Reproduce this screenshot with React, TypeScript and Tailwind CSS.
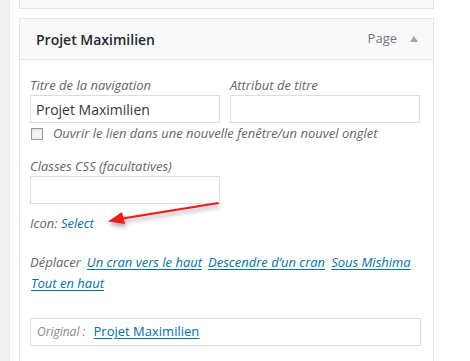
const links = ["Un cran vers le haut", "Descendre d’un cran", "Sous Mishima", "Tout en haut"];

const App = () => {
  return (
    <div className="relative w-[470px] h-[361px] overflow-hidden bg-white flex font-['Open_Sans',sans-serif] text-[13px] text-[#444]">
      <div className="w-[10px] shrink-0 bg-[#f1f1f1] border-r border-[#e8e8e8]"></div>
      <div className="pl-[9px] w-[424px] shrink-0 flex flex-col">
        <div className="h-[9px] border-x border-b border-[#e5e5e5] bg-[#f9f9f9]"></div>
        <div className="mt-[9px] flex-1 border border-[#e5e5e5] border-b-0 bg-white">
          <div className="h-[41px] pl-[16px] pr-[15px] bg-[#f9f9f9] border-b border-[#e5e5e5] flex items-center justify-between">
            <div className="text-[14px] font-semibold text-[#23282d]">Projet Maximilien</div>
            <div className="flex items-center gap-[13px]">
              <span className="text-[13px] text-[#72777c]">Page</span>
              <span className="w-0 h-0 border-x-[4px] border-x-transparent border-b-[6px] border-b-[#a0a5aa]"></span>
            </div>
          </div>
          <div className="pt-[15px] pl-[10px] pr-[12px]">
            <div className="grid grid-cols-[190px_190px] gap-x-[10px]">
              <div>
                <div className="italic text-[#666] leading-[20px]">Titre de la navigation</div>
                <div className="h-[28px] border border-[#ddd] px-[5px] flex items-center text-[14px] text-[#32373c]">Projet Maximilien</div>
              </div>
              <div>
                <div className="italic text-[#666] leading-[20px]">Attribut de titre</div>
                <div className="h-[28px] border border-[#ddd]"></div>
              </div>
            </div>
            <div className="h-[21px] flex items-center gap-[10px] pl-[1px]">
              <span className="w-[12px] h-[12px] border border-[#999] bg-[#f3f3f3] shadow-[inset_0_1px_2px_rgba(0,0,0,0.1)]"></span>
              <span className="italic text-[#666]">Ouvrir le lien dans une nouvelle fenêtre/un nouvel onglet</span>
            </div>
            <div className="mt-[12px] italic text-[#666] leading-[20px]">Classes CSS (facultatives)</div>
            <div className="w-[190px] h-[28px] border border-[#ddd]"></div>
            <div className="mt-[9px] leading-[20px] italic text-[#666]">
              Icon: <span className="text-[#0073aa]">Select</span>
            </div>
            <div className="mt-[19px] leading-[21px] italic text-[#666] flex flex-wrap gap-x-[5px]">
              <span>Déplacer</span>
              {links.map((l) => (
                <a key={l} className="text-[#0073aa] underline underline-offset-[2px] pl-[1px]">
                  {l}
                </a>
              ))}
            </div>
            <div className="mt-[24px] h-[28px] border border-[#ddd] px-[6px] flex items-center gap-[8px]">
              <span className="italic text-[12px] text-[#888]">Original :</span>
              <a className="text-[#0073aa] underline underline-offset-[2px]">Projet Maximilien</a>
            </div>
          </div>
        </div>
      </div>
      <svg className="absolute left-[100px] top-[196px]" width="130" height="40" viewBox="0 0 130 40">
        <defs>
          <filter id="sh" x="-20%" y="-50%" width="140%" height="220%">
            <feDropShadow dx="1" dy="3" stdDeviation="2" floodColor="#000" floodOpacity="0.35" />
          </filter>
        </defs>
        <g filter="url(#sh)">
          <path d="M118 6 L22 21.5 L23 23.5 L119 8 Z" fill="#ee1c1c" />
          <path d="M8 25.5 L22 16 L25 28 Z" fill="#ee1c1c" />
        </g>
      </svg>
    </div>
  );
};

export default App;
